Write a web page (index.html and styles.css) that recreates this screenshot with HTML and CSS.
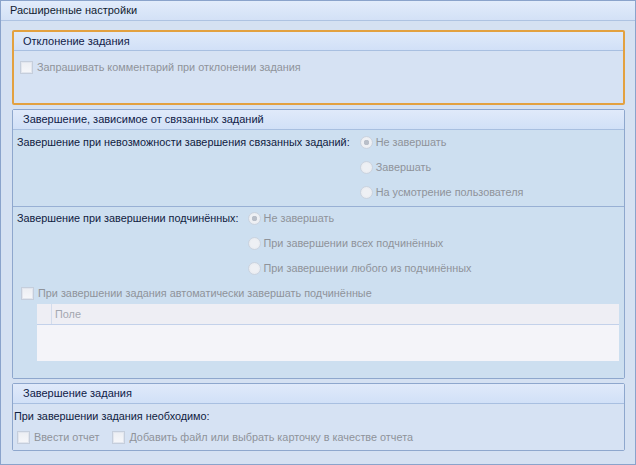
FILE: index.html
```html
<!DOCTYPE html>
<html lang="ru">
<head>
<meta charset="utf-8">
<link rel="stylesheet" href="styles.css">
</head>
<body>
<div class="window">
  <div class="win-header">Расширенные настройки</div>
  <div class="win-body">
    <section class="group group-focused g1">
      <div class="group-header">Отклонение задания</div>
      <div class="group-body g1-body">
        <label class="check disabled"><span class="box"></span>Запрашивать комментарий при отклонении задания</label>
      </div>
    </section>

    <section class="group g2">
      <div class="group-header">Завершение, зависимое от связанных заданий</div>
      <div class="group-body g2-body">
        <div class="opt-row r1">
          <div class="opt-label">Завершение при невозможности завершения связанных заданий:</div>
          <div class="radios">
            <label class="radio disabled checked"><span class="dot"></span>Не завершать</label>
            <label class="radio disabled"><span class="dot"></span>Завершать</label>
            <label class="radio disabled"><span class="dot"></span>На усмотрение пользователя</label>
          </div>
        </div>
        <div class="opt-row r2">
          <div class="opt-label">Завершение при завершении подчинённых:</div>
          <div class="radios">
            <label class="radio disabled checked"><span class="dot"></span>Не завершать</label>
            <label class="radio disabled"><span class="dot"></span>При завершении всех подчинённых</label>
            <label class="radio disabled"><span class="dot"></span>При завершении любого из подчинённых</label>
          </div>
        </div>
        <label class="check disabled auto"><span class="box"></span>При завершении задания автоматически завершать подчинённые</label>
        <div class="grid">
          <div class="grid-head"><div class="grid-ind"></div><div class="grid-col">Поле</div></div>
          <div class="grid-rows"></div>
        </div>
      </div>
    </section>

    <section class="group g3">
      <div class="group-header">Завершение задания</div>
      <div class="group-body g3-body">
        <div class="plain">При завершении задания необходимо:</div>
        <div class="checks">
          <label class="check disabled"><span class="box"></span>Ввести отчет</label>
          <label class="check disabled"><span class="box"></span>Добавить файл или выбрать карточку в качестве отчета</label>
        </div>
      </div>
    </section>
  </div>
</div>
</body>
</html>
```
FILE: styles.css
```css
* { box-sizing: border-box; }
html, body { margin: 0; padding: 0; }
body {
  font-family: "Liberation Sans", Arial, sans-serif;
  font-size: 10.85px;
  color: #1b2a44;
  background: #d6e2f3;
}
.window {
  width: 636px;
  height: 465px;
  border: 1px solid #8aa3cb;
  background: #d5e1f2;
  display: flex;
  flex-direction: column;
}
.win-header {
  height: 20px;
  padding-left: 9px;
  line-height: 19px;
  font-size: 11px;
  color: #111c30;
  background: linear-gradient(#e2ecfb, #d3e1f6);
  border-bottom: 1px solid #aec3e2;
}
.win-body {
  padding: 9px 10px 0 10px;
  display: flex;
  flex-direction: column;
  gap: 4px;
}
.group {
  border: 1px solid #8ea7cd;
  border-radius: 2px;
  display: flex;
  flex-direction: column;
}
.group-focused {
  border: 2px solid #e3a140;
  box-shadow: inset 0 0 0 1px #f0c880;
}
.group-header {
  height: 20px;
  line-height: 19px;
  padding-left: 10px;
  font-size: 11px;
  color: #0f2047;
  background: linear-gradient(#e0eafa, #d1e0f7);
  border-bottom: 1px solid #a8bfe0;
}
.group-focused .group-header { padding-left: 9px; height: 19px; }
.g1 { height: 75px; margin-left: 1px; }
.g1-body { padding: 9px 0 0 6px; background: #d6e2f3; flex: 1; }
.g2 { height: 270px; margin-left: 1px; }
.g2-body { background: #cddff0; flex: 1; display: flex; flex-direction: column; }
.g3 { height: 68px; margin-left: 1px; }
.g3-body { background: #d6e2f3; flex: 1; padding: 5px 0 0 1px; }

.check, .radio {
  display: flex;
  align-items: center;
  height: 14px;
  white-space: nowrap;
}
.disabled { color: #8f939a; }
.box {
  width: 13px;
  height: 13px;
  margin-right: 4px;
  border: 1px solid #c5cedc;
  background: linear-gradient(#eceef3, #f6f7fa);
  box-shadow: inset 0 0 0 1px #e2e6ee;
  flex: none;
}
.dot {
  width: 13px;
  height: 13px;
  margin-right: 3px;
  border-radius: 50%;
  border: 1px solid #cbd3df;
  background: radial-gradient(circle, #eef0f4 45%, #e2e6ec 100%);
  flex: none;
}
.radio.checked .dot {
  background: radial-gradient(circle, #b9bfc9 0 2.5px, #eef0f4 3px 55%, #e0e4ea 100%);
}

.opt-row {
  display: flex;
  padding-left: 4px;
}
.r1 { padding-top: 5px; height: 77px; border-bottom: 1px solid #98b0d4; }
.r2 { padding-top: 4px; height: 72px; }
.opt-label {
  color: #10213f;
  height: 14px;
  line-height: 14px;
  white-space: nowrap;
}
.radios { display: flex; flex-direction: column; gap: 11px; margin-left: 10px; }
.r2 .radios { margin-left: 9px; }

.auto { margin: 7px 0 0 8px; }
.grid {
  margin: 4px 5px 0 24px;
  height: 57px;
  background: #f4f4f9;
  display: flex;
  flex-direction: column;
}
.grid-head {
  height: 21px;
  display: flex;
  background: #eeeef4;
  border-bottom: 1px solid #c3d1ea;
}
.grid-ind { width: 15px; border-right: 1px solid #d3dcec; }
.grid-col {
  padding-left: 3px;
  line-height: 20px;
  color: #a3a7b0;
}

.plain { color: #10213f; height: 14px; line-height: 14px; }
.checks { display: flex; gap: 13px; margin: 7px 0 0 3px; }
```
